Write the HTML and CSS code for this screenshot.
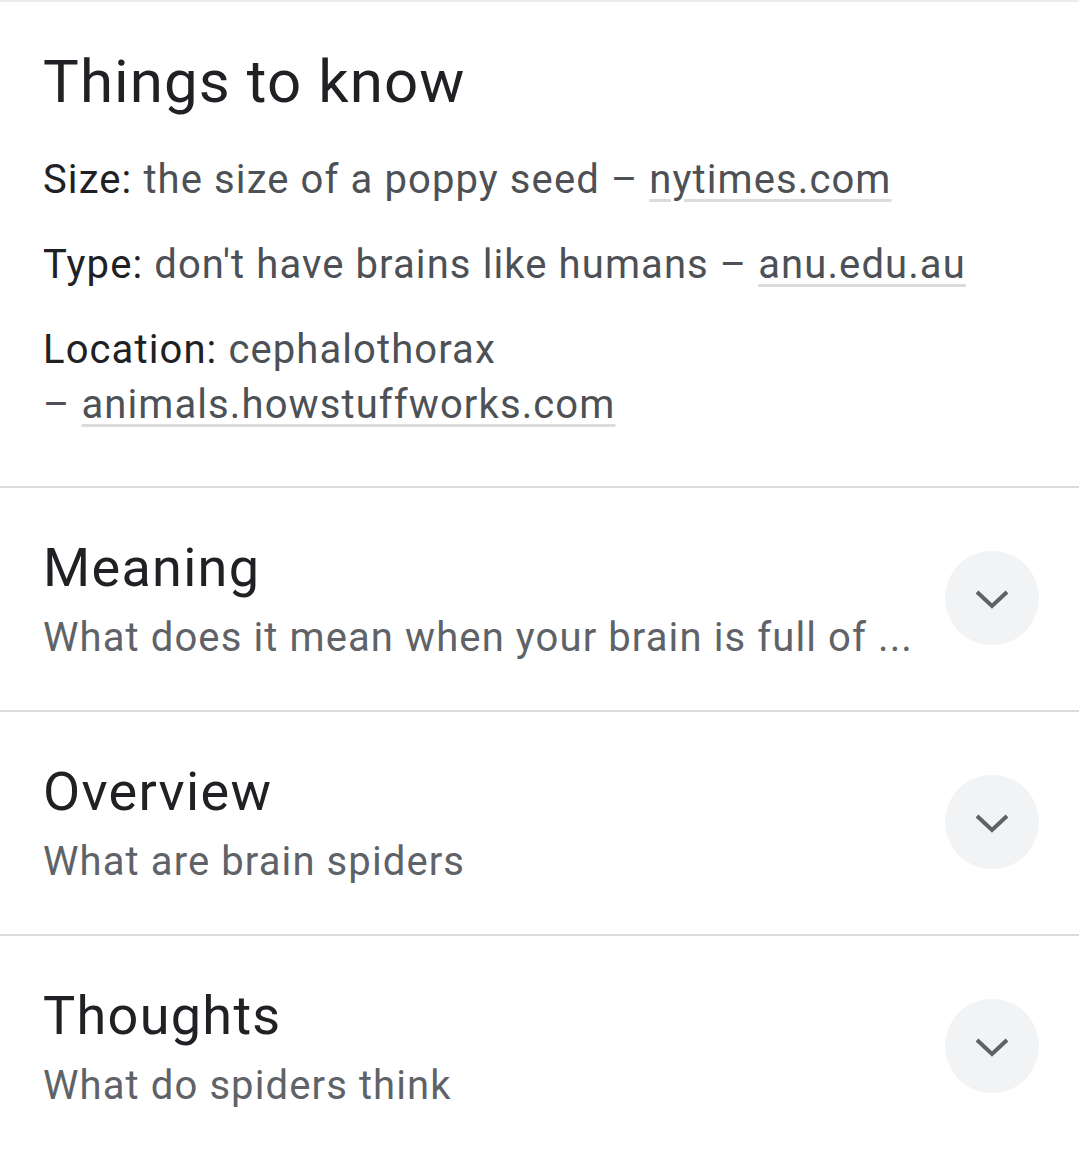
FILE: index.html
```html
<!DOCTYPE html>
<html lang="en">
<head>
<meta charset="utf-8">
<title>Things to know</title>
<link rel="stylesheet" href="styles.css">
</head>
<body>
<div class="page">
  <section class="know">
    <h2 class="know-title">Things to know</h2>
    <p class="fact"><span class="label">Size:</span> the size of a poppy seed – <a class="src" href="#">nytimes.com</a></p>
    <p class="fact"><span class="label">Type:</span> don't have brains like humans – <a class="src" href="#">anu.edu.au</a></p>
    <p class="fact"><span class="label">Location:</span> cephalothorax<br>– <a class="src" href="#">animals.howstuffworks.com</a></p>
  </section>

  <div class="topic">
    <div class="topic-text">
      <div class="topic-title">Meaning</div>
      <div class="topic-sub">What does it mean when your brain is full of ...</div>
    </div>
    <div class="chev"><svg class="chev-icon" viewBox="0 0 34 26" width="34" height="26"><path d="M2 7 L17 21 L32 7"/></svg></div>
  </div>

  <div class="topic">
    <div class="topic-text">
      <div class="topic-title">Overview</div>
      <div class="topic-sub">What are brain spiders</div>
    </div>
    <div class="chev"><svg class="chev-icon" viewBox="0 0 34 26" width="34" height="26"><path d="M2 7 L17 21 L32 7"/></svg></div>
  </div>

  <div class="topic">
    <div class="topic-text">
      <div class="topic-title">Thoughts</div>
      <div class="topic-sub">What do spiders think</div>
    </div>
    <div class="chev"><svg class="chev-icon" viewBox="0 0 34 26" width="34" height="26"><path d="M2 7 L17 21 L32 7"/></svg></div>
  </div>
</div>
</body>
</html>
```
FILE: styles.css
```css
html, body {
  margin: 0;
  padding: 0;
  background: #fff;
}
body {
  font-family: Roboto, "Noto Sans", Arial, sans-serif;
  color: #4d5156;
}
.page {
  border-top: 2px solid #ececec;
  overflow: hidden;
}
.know {
  padding: 40px 40px 54px 43px;
}
.know-title {
  margin: 0 0 30px;
  font-size: 60px;
  line-height: 80px;
  font-weight: 400;
  letter-spacing: 1.1px;
  color: #202124;
}
.fact {
  margin: 0 0 30px;
  font-size: 40px;
  line-height: 55px;
  letter-spacing: 1.1px;
  color: #4d5156;
}
.fact:last-child {
  margin-bottom: 0;
}
.label {
  color: #202124;
}
.src {
  color: #4d5156;
  text-decoration: underline;
  text-decoration-color: #dadce0;
  text-decoration-thickness: 3px;
  text-underline-offset: 6px;
}
.topic {
  border-top: 2px solid #dadce0;
  padding: 42px 40px 45px 43px;
  display: flex;
  align-items: center;
  justify-content: space-between;
}
.topic-text {
  display: flex;
  flex-direction: column;
  gap: 5px;
}
.topic-title {
  font-size: 54px;
  line-height: 75px;
  letter-spacing: 1.3px;
  color: #202124;
}
.topic-sub {
  font-size: 40px;
  line-height: 55px;
  letter-spacing: 1.1px;
  color: #5f6368;
}
.chev {
  width: 94px;
  height: 94px;
  border-radius: 50%;
  background: #f1f3f4;
  display: flex;
  align-items: center;
  justify-content: center;
  flex: none;
}
.chev-icon path {
  fill: none;
  stroke: #5f6368;
  stroke-width: 4;
}
```
